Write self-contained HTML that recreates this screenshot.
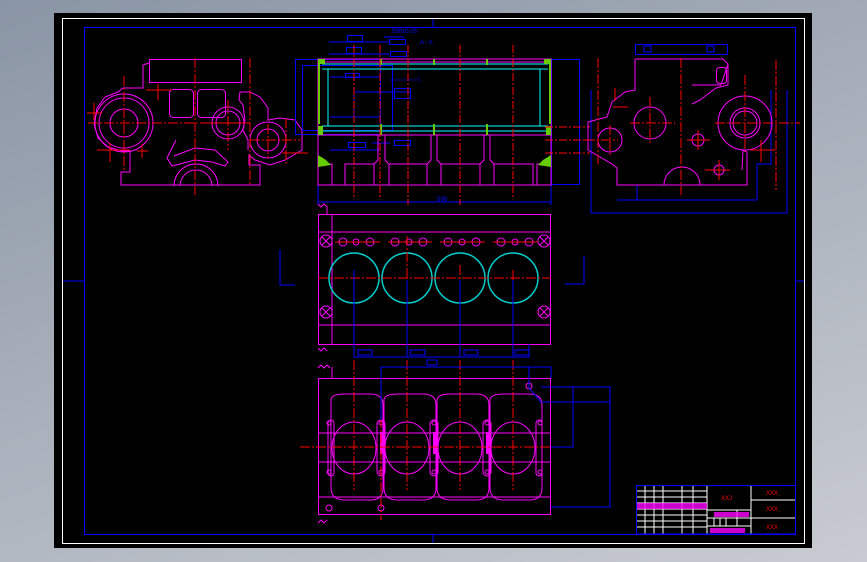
<!DOCTYPE html>
<html><head><meta charset="utf-8"><style>
html,body{margin:0;padding:0;width:867px;height:562px;overflow:hidden;background:linear-gradient(160deg,#8a95a5 0%,#aab1bc 50%,#c8cbd1 100%);}
svg{position:absolute;left:0;top:0}
text{font-family:"Liberation Sans","Noto Sans CJK SC",sans-serif;font-size:6px}
</style></head><body>
<svg width="867" height="562" viewBox="0 0 867 562" fill="none" stroke-width="1">
<rect x="54" y="13" width="758" height="535" fill="#000"/>
<rect x="62.5" y="18.5" width="742" height="525" stroke="#fff"/>
<rect x="84.5" y="27.5" width="711" height="507" stroke="#0000ff"/>
<line x1="63" y1="281" x2="85" y2="281" stroke="#00f"/><line x1="796" y1="281" x2="804" y2="281" stroke="#00f"/>
<line x1="433" y1="19" x2="433" y2="28" stroke="#00f"/><line x1="433" y1="535" x2="433" y2="543" stroke="#00f"/>

<!-- LEFT VIEW -->
<g stroke="#ff00ff">
<rect x="149.5" y="59.5" width="92" height="23"/>
<path d="M149 63 L143 65 L143 88 L123 88 L118 92 L105 97 L97 108 L94 124 L98 138 L108 147 L122 151 L130 151 L130 172 L121 172 L121 185 L260 185 L260 165 L249 165 L249 155 L255 160 L270 165 L285 160 L302 150 L302 130 L295 120 L280 118 L268 120 L268 108 L260 97 L250 92 L240 92 L239 100 L243 105 L245 120 L243 130 L248 140 L248 150"/>
<circle cx="124" cy="123" r="25"/><circle cx="124" cy="123" r="14"/><circle cx="124" cy="123" r="29"/>
<rect x="169.5" y="89.5" width="24" height="28" rx="4"/><rect x="197.5" y="89.5" width="28" height="28" rx="4"/>
<circle cx="228" cy="123" r="12"/><circle cx="228" cy="123" r="16"/>
<circle cx="268" cy="140" r="11"/><circle cx="268" cy="140" r="18"/>
<path d="M174 156 L195 148 L215 150 L228 162 L225 166 L212 162 L195 160 L172 166 L167 158 L176 140"/>
<path d="M174 186 A22 22 0 0 1 218 186 M180 186 A16 16 0 0 1 212 186"/>
</g>
<g stroke="#ff0000" stroke-dasharray="10 2 2 2">
<line x1="88" y1="123" x2="250" y2="123"/><line x1="124" y1="76" x2="124" y2="172"/>
<line x1="195" y1="58" x2="195" y2="195"/><line x1="250" y1="58" x2="250" y2="185"/>
<line x1="207" y1="123" x2="248" y2="123"/><line x1="228" y1="100" x2="228" y2="150"/>
<line x1="250" y1="140" x2="300" y2="140"/><line x1="268" y1="124" x2="268" y2="158"/>
<line x1="286" y1="118" x2="286" y2="165"/>
</g>
<g stroke="#ff0000"><line x1="97" y1="150" x2="130" y2="150"/><line x1="110" y1="143" x2="110" y2="162"/><line x1="137" y1="151" x2="148" y2="151"/><line x1="142" y1="144" x2="142" y2="158"/><line x1="87" y1="113" x2="102" y2="113"/><line x1="94" y1="103" x2="94" y2="120"/><line x1="146" y1="90" x2="172" y2="90"/><line x1="158" y1="84" x2="158" y2="100"/><line x1="282" y1="153" x2="308" y2="153"/></g>

<!-- TOP MIDDLE VIEW -->
<g stroke="#0000ff">
<rect x="295.5" y="59.5" width="85" height="75"/><rect x="302.5" y="65.5" width="90" height="65"/>
<line x1="318" y1="202" x2="551" y2="202"/><line x1="318" y1="185" x2="318" y2="205"/><line x1="551" y1="185" x2="551" y2="205"/>
<rect x="347.5" y="35.5" width="15" height="6"/><rect x="346.5" y="47.5" width="15" height="6"/>
<rect x="389.5" y="39.5" width="16" height="5"/><rect x="390.5" y="51.5" width="16" height="5"/>
<line x1="329" y1="42" x2="389" y2="42"/><line x1="329" y1="54" x2="389" y2="54"/>
<rect x="345.5" y="73.5" width="14" height="4"/><rect x="394.5" y="88.5" width="16" height="10"/>
<rect x="348.5" y="142.5" width="17" height="5"/><rect x="394.5" y="140.5" width="16" height="5"/>
<line x1="330" y1="150" x2="380" y2="150"/>
<line x1="330" y1="77" x2="380" y2="77"/><line x1="330" y1="117" x2="380" y2="117"/><line x1="355" y1="92" x2="410" y2="92"/><line x1="354" y1="95" x2="354" y2="120"/><line x1="372" y1="143" x2="390" y2="143"/>
<rect x="551.5" y="59.5" width="28" height="125"/>
<line x1="384" y1="37" x2="404" y2="37"/>
</g>
<text x="392" y="33" fill="#00f">598±0.05</text><text x="420" y="44" fill="#00f">A - A</text>
<text x="390" y="81" fill="#00f" style="font-size:4px">M14×1.5-6H 4 孔</text>
<text x="437" y="201" fill="#00f">598</text>
<rect x="318" y="59" width="233" height="126" stroke="#ff00ff"/>
<g stroke="#ff00ff"><line x1="318" y1="135" x2="551" y2="135"/>
<path d="M318 164 L332 164 L332 185 M345 185 L345 164 L374 164 L374 185 M389 185 L389 164 L427 164 L427 185 M441 185 L441 164 L480 164 L480 185 M494 185 L494 164 L533 164 L533 185 M537 185 L537 164 L551 164"/>
<path d="M378 135 L378 160 L374 164 M385 135 L385 160 L389 164 M431 135 L431 160 L427 164 M437 135 L437 160 L441 164 M484 135 L484 160 L480 164 M490 135 L490 160 L494 164"/>
<line x1="318" y1="62" x2="551" y2="62"/></g>
<g stroke="#00ffff"><line x1="322" y1="64" x2="548" y2="64"/><line x1="322" y1="69" x2="548" y2="69"/><line x1="322" y1="126" x2="548" y2="126"/><line x1="322" y1="131" x2="548" y2="131"/>
<line x1="328" y1="69" x2="328" y2="126"/><line x1="540" y1="69" x2="540" y2="126"/></g>
<g fill="#66cc00">
<rect x="380" y="59" width="2" height="6"/><rect x="433" y="59" width="2" height="6"/><rect x="486" y="59" width="2" height="6"/>
<rect x="380" y="124" width="2" height="11"/><rect x="433" y="124" width="2" height="11"/><rect x="486" y="124" width="2" height="11"/>
<rect x="318" y="59" width="7" height="5"/><rect x="544" y="59" width="7" height="5"/>
<path d="M318 64 h2 v60 h-2z M549 64 h2 v60 h-2z"/>
<path d="M318 155 L326 160 L331 165 L318 167Z M551 155 L543 160 L538 165 L551 167Z"/>
<rect x="318" y="126" width="5" height="9"/><rect x="546" y="126" width="5" height="9"/>
</g>
<g stroke="#ff0000" stroke-dasharray="8 2 2 2"><line x1="354" y1="45" x2="354" y2="198"/><line x1="408" y1="45" x2="408" y2="205"/><line x1="460" y1="45" x2="460" y2="205"/><line x1="513" y1="45" x2="513" y2="198"/><line x1="380" y1="45" x2="380" y2="198"/>
<line x1="545" y1="127" x2="590" y2="127"/><line x1="545" y1="140" x2="590" y2="140"/><line x1="545" y1="153" x2="590" y2="153"/></g>

<!-- RIGHT VIEW -->
<g stroke="#0000ff"><rect x="635.5" y="44.5" width="92" height="10"/><path d="M591 90 v123 h196 V90 M617 200 h140 v-36 h14 V90 M637 200 V185"/>
<rect x="644" y="46" width="7" height="6"/><rect x="707" y="46" width="7" height="6"/></g>
<g stroke="#ff00ff">
<path d="M635 59 L723 59 L728 64 L728 85 L716 88 L700 100 L692 104 M635 59 L635 90 L625 92 L612 102 L607 117 L588 122 L588 150 L612 164 L617 168 L617 185 L747 185 L747 152 L743 150 L742 170 M692 85 L721 85 L728 64"/>
<circle cx="650" cy="123" r="16"/><circle cx="745" cy="123" r="27"/><circle cx="745" cy="123" r="15"/><circle cx="745" cy="123" r="12"/><circle cx="698" cy="140" r="6"/><circle cx="719" cy="170" r="5"/>
<circle cx="610" cy="140" r="12"/>
<path d="M664 185 A18 18 0 0 1 700 185"/>
<rect x="716.5" y="67.5" width="10" height="16" rx="3"/>
</g>
<g stroke="#ff0000" stroke-dasharray="10 2 2 2"><line x1="681" y1="58" x2="681" y2="195"/><line x1="598" y1="58" x2="598" y2="165"/><line x1="776" y1="60" x2="776" y2="190"/>
<line x1="630" y1="123" x2="675" y2="123"/><line x1="715" y1="123" x2="800" y2="123"/><line x1="745" y1="75" x2="745" y2="152"/><line x1="650" y1="97" x2="650" y2="145"/><line x1="585" y1="140" x2="618" y2="140"/><line x1="610" y1="125" x2="610" y2="155"/></g>
<g stroke="#ff0000"><line x1="687" y1="140" x2="710" y2="140"/><line x1="698" y1="130" x2="698" y2="150"/><line x1="705" y1="170" x2="730" y2="170"/><line x1="719" y1="160" x2="719" y2="180"/><line x1="750" y1="150" x2="775" y2="150"/><line x1="761" y1="140" x2="761" y2="162"/><line x1="613" y1="107" x2="628" y2="107"/><line x1="615" y1="88" x2="615" y2="101"/></g>

<!-- MIDDLE VIEW -->
<g stroke="#ff00ff">
<rect x="318.5" y="214.5" width="232" height="130"/>
<line x1="318" y1="232" x2="551" y2="232"/><line x1="318" y1="325" x2="551" y2="325"/><line x1="332" y1="214" x2="332" y2="344"/>
<path d="M318 204 l3 3 l3 -3 l3 3 v8 M318 348 l3 3 l3 -3 l3 3"/>
<circle cx="326" cy="241" r="6"/><circle cx="544" cy="241" r="6"/><circle cx="326" cy="312" r="6"/><circle cx="544" cy="312" r="6"/>
<path d="M322 237 l8 8 M330 237 l-8 8 M540 237 l8 8 M548 237 l-8 8 M322 308 l8 8 M330 308 l-8 8 M540 308 l8 8 M548 308 l-8 8"/>
<circle cx="343" cy="242" r="4"/><circle cx="356" cy="242" r="3"/><circle cx="370" cy="242" r="4"/>
<circle cx="395" cy="242" r="4"/><circle cx="409" cy="242" r="3"/><circle cx="423" cy="242" r="4"/>
<circle cx="448" cy="242" r="4"/><circle cx="462" cy="242" r="3"/><circle cx="476" cy="242" r="4"/>
<circle cx="501" cy="242" r="4"/><circle cx="515" cy="242" r="3"/><circle cx="529" cy="242" r="4"/>
</g>
<g stroke="#00cccc" stroke-width="1.5"><circle cx="354" cy="278" r="25"/><circle cx="407" cy="278" r="25"/><circle cx="460" cy="278" r="25"/><circle cx="513" cy="278" r="25"/></g>
<g stroke="#ff0000" stroke-dasharray="10 2 2 2"><line x1="318" y1="278" x2="551" y2="278"/><line x1="407" y1="236" x2="407" y2="330"/><line x1="460" y1="265" x2="460" y2="330"/><line x1="513" y1="270" x2="513" y2="330"/></g>
<g stroke="#ff0000"><line x1="335" y1="242" x2="380" y2="242"/><line x1="388" y1="242" x2="432" y2="242"/><line x1="440" y1="242" x2="485" y2="242"/><line x1="493" y1="242" x2="538" y2="242"/></g>
<g stroke="#0000ff"><path d="M354 270 V357 H529 V344 M407 280 V357 M460 280 V357 M513 280 V357"/>
<rect x="358" y="350" width="14" height="5"/><rect x="410" y="350" width="15" height="5"/><rect x="464" y="350" width="14" height="5"/><rect x="515" y="350" width="14" height="5"/>
<path d="M565 284 H584 V256 M280 250 v35 h15"/></g>

<!-- BOTTOM VIEW -->
<g stroke="#ff00ff">
<rect x="318.5" y="378.5" width="232" height="136"/>
<line x1="318" y1="433" x2="551" y2="433"/><line x1="318" y1="462" x2="551" y2="462"/><line x1="318" y1="497" x2="551" y2="497"/><line x1="332" y1="367" x2="332" y2="378"/>
<path d="M318 368 l3 -3 l3 3 l3 -3 l3 3 M318 523 l3 -3 l3 3 l3 -3"/>
<path d="M331 400 Q331 394 345 394 H370 Q383 394 383 405 V488 Q383 500 370 500 H345 Q331 500 331 488Z"/>
<path d="M384 400 Q384 394 398 394 H423 Q436 394 436 405 V488 Q436 500 423 500 H398 Q384 500 384 488Z"/>
<path d="M437 400 Q437 394 451 394 H476 Q489 394 489 405 V488 Q489 500 476 500 H451 Q437 500 437 488Z"/>
<path d="M490 400 Q490 394 504 394 H529 Q542 394 542 405 V488 Q542 500 529 500 H504 Q490 500 490 488Z"/>
<ellipse cx="354" cy="448" rx="22" ry="26"/><ellipse cx="407" cy="448" rx="22" ry="26"/><ellipse cx="460" cy="448" rx="22" ry="26"/><ellipse cx="513" cy="448" rx="22" ry="26"/>
<rect x="377" y="420" width="8" height="56" rx="4"/><rect x="430" y="420" width="8" height="56" rx="4"/><rect x="483" y="420" width="8" height="56" rx="4"/><rect x="328" y="420" width="6" height="56" rx="3"/><rect x="536" y="420" width="6" height="56" rx="3"/>
<circle cx="329" cy="423" r="2"/><circle cx="329" cy="472" r="2"/><circle cx="381" cy="423" r="2"/><circle cx="381" cy="472" r="2"/><circle cx="434" cy="423" r="2"/><circle cx="434" cy="472" r="2"/><circle cx="487" cy="423" r="2"/><circle cx="487" cy="472" r="2"/><circle cx="540" cy="423" r="2"/><circle cx="540" cy="472" r="2"/>
<circle cx="329" cy="508" r="3"/><circle cx="381" cy="508" r="3"/><circle cx="529" cy="386" r="3"/>
</g>
<g fill="#ff00ff"><rect x="380" y="432" width="3" height="22"/><rect x="433" y="432" width="3" height="22"/><rect x="486" y="432" width="3" height="22"/></g>
<g stroke="#ff0000" stroke-dasharray="10 2 2 2"><line x1="300" y1="447" x2="551" y2="447"/><line x1="354" y1="360" x2="354" y2="490"/><line x1="407" y1="360" x2="407" y2="490"/><line x1="460" y1="360" x2="460" y2="490"/><line x1="513" y1="360" x2="513" y2="490"/><line x1="381" y1="370" x2="381" y2="520"/></g>
<g stroke="#0000ff"><path d="M381 420 V367 H551 V378 M529 367 V388 L541 402 H610 M541 387 H573 V447 H551 M551 387 H610 V507 H551"/>
<rect x="427" y="360" width="10" height="5"/></g>

<!-- TITLE BLOCK -->
<g stroke="#fff">
<path d="M645 485 V534 M654 485 V534 M663 485 V534 M682 485 V534 M693 485 V534 M707 485 V534 M751 485 V534 M636 491 H707 M636 497 H707 M636 503 H707 M636 509 H707 M636 515 H707 M636 521 H707 M636 527 H707 M751 500 H795 M751 518 H795 M707 510 H751 M707 518 H751 M707 526 H751 M714 518 V526 M720 518 V526 M726 518 V526 M737 510 V526"/>
</g>
<rect x="636.5" y="485.5" width="159" height="48.5" stroke="#0000ff"/>
<rect x="637" y="503" width="70" height="6" fill="#ff00ff" opacity=".8"/>
<rect x="714" y="512" width="35" height="5" fill="#ff00ff" opacity=".8"/>
<rect x="710" y="528" width="35" height="5" fill="#ff00ff" opacity=".8"/>
<text x="721" y="500" fill="#f00">XXJ</text><text x="766" y="495" fill="#f00">XXX</text><text x="766" y="511" fill="#f00">XXX</text><text x="766" y="529" fill="#f00">XXX</text>
</svg>
</body></html>
